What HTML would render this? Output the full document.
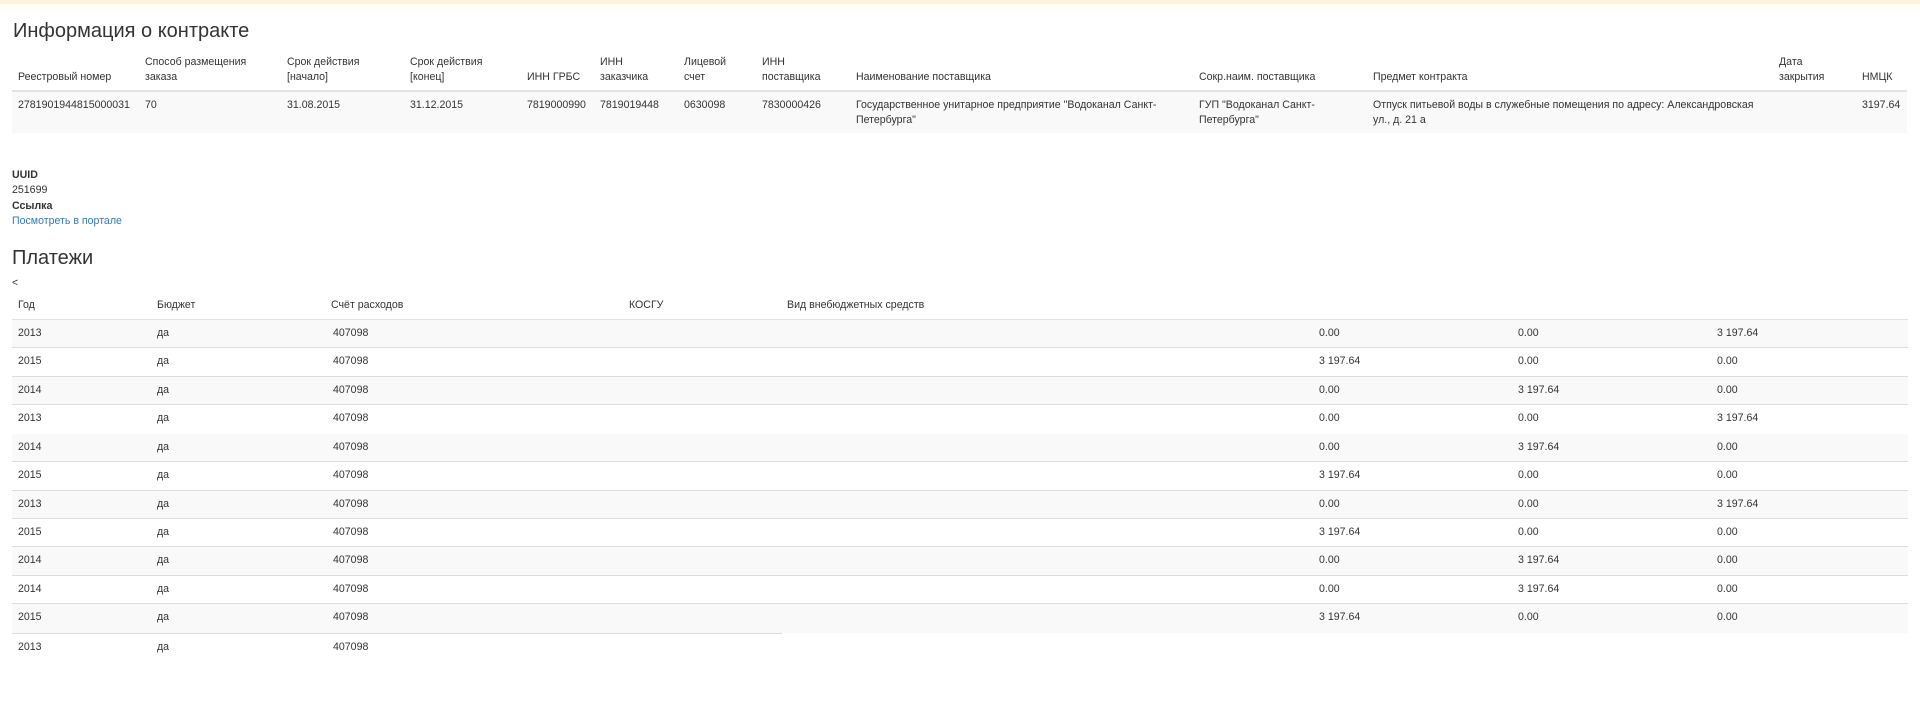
<!DOCTYPE html>
<html><head><meta charset="utf-8"><style>
body{margin:0;width:1920px;height:709px;overflow:hidden;background:#fff;font-family:"Liberation Sans",Arial,sans-serif;color:#333;position:relative;font-size:10.6px}
div.a{position:absolute;white-space:nowrap;line-height:15px}
.h{font-size:20px;line-height:22px}
.band{position:absolute;left:0;top:0;width:1920px;height:4px;background:#fbf3dc}
.band2{position:absolute;left:0;top:4px;width:1920px;height:8px;background:#fffdf6}
.bg{position:absolute;background:#f9f9f9}
.ln{position:absolute;height:1px;background:#ddd}
</style></head><body>
<div class="band"></div><div class="band2"></div>
<div class="a h" style="left:13px;top:24px">Информация о контракте</div>

<div class="a" style="left:18px;top:70px">Реестровый номер</div>
<div class="a" style="left:145px;top:55px">Способ размещения<br>заказа</div>
<div class="a" style="left:287px;top:55px">Срок действия<br>[начало]</div>
<div class="a" style="left:410px;top:55px">Срок действия<br>[конец]</div>
<div class="a" style="left:527px;top:70px">ИНН ГРБС</div>
<div class="a" style="left:600px;top:55px">ИНН<br>заказчика</div>
<div class="a" style="left:684px;top:55px">Лицевой<br>счет</div>
<div class="a" style="left:762px;top:55px">ИНН<br>поставщика</div>
<div class="a" style="left:856px;top:70px">Наименование поставщика</div>
<div class="a" style="left:1199px;top:70px">Сокр.наим. поставщика</div>
<div class="a" style="left:1373px;top:70px">Предмет контракта</div>
<div class="a" style="left:1779px;top:55px">Дата<br>закрытия</div>
<div class="a" style="left:1862px;top:70px">НМЦК</div>
<div class="ln" style="left:12px;top:90px;width:1895px;height:2px;background:#e2e2e2"></div>
<div class="bg" style="left:12px;top:92px;width:1895px;height:41px"></div>
<div class="a" style="left:18px;top:98px">2781901944815000031</div>
<div class="a" style="left:145px;top:98px">70</div>
<div class="a" style="left:287px;top:98px">31.08.2015</div>
<div class="a" style="left:410px;top:98px">31.12.2015</div>
<div class="a" style="left:527px;top:98px">7819000990</div>
<div class="a" style="left:600px;top:98px">7819019448</div>
<div class="a" style="left:684px;top:98px">0630098</div>
<div class="a" style="left:762px;top:98px">7830000426</div>
<div class="a" style="left:856px;top:98px">Государственное унитарное предприятие "Водоканал Санкт-<br>Петербурга"</div>
<div class="a" style="left:1199px;top:98px">ГУП "Водоканал Санкт-<br>Петербурга"</div>
<div class="a" style="left:1373px;top:98px">Отпуск питьевой воды в служебные помещения по адресу: Александровская<br>ул., д. 21 а</div>
<div class="a" style="left:1862px;top:98px">3197.64</div>

<div class="a" style="left:12px;top:168px;font-weight:bold">UUID</div>
<div class="a" style="left:12px;top:183px">251699</div>
<div class="a" style="left:12px;top:199px;font-weight:bold">Ссылка</div>
<div class="a" style="left:12px;top:214px;color:#337ab7">Посмотреть в портале</div>

<div class="a h" style="left:12px;top:251px">Платежи</div>
<div class="a" style="left:12px;top:276px">&lt;</div>
<div class="a" style="left:18px;top:298px">Год</div>
<div class="a" style="left:157px;top:298px">Бюджет</div>
<div class="a" style="left:331px;top:298px">Счёт расходов</div>
<div class="a" style="left:629px;top:298px">КОСГУ</div>
<div class="a" style="left:787px;top:298px">Вид внебюджетных средств</div>
<div id="rows"></div>
<script>
var d=[["2013","0.00","0.00","3 197.64"],["2015","3 197.64","0.00","0.00"],["2014","0.00","3 197.64","0.00"],["2013","0.00","0.00","3 197.64"],["2014","0.00","3 197.64","0.00"],["2015","3 197.64","0.00","0.00"],["2013","0.00","0.00","3 197.64"],["2015","3 197.64","0.00","0.00"],["2014","0.00","3 197.64","0.00"],["2014","0.00","3 197.64","0.00"],["2015","3 197.64","0.00","0.00"],["2013","","",""]];
var tops=[319,347,376,404,433,461,490,518,546,575,603,633],h="";
for(var i=0;i<12;i++){var t=tops[i],nx=i<11?tops[i+1]:661;
var w=i==11?770:1896;
if(i!=4)h+='<div class="ln" style="left:12px;top:'+t+'px;width:'+w+'px;'+(i==0?'height:2px;background:#e2e2e2':'')+'"></div>';
if(i%2==0&&i<11)h+='<div class="bg" style="left:12px;top:'+(t+1)+'px;width:1896px;height:'+(nx-t-1)+'px"></div>';
var y=t+7;
h+='<div class="a" style="left:18px;top:'+y+'px">'+d[i][0]+'</div><div class="a" style="left:157px;top:'+y+'px">да</div><div class="a" style="left:333px;top:'+y+'px">407098</div>';
if(d[i][1])h+='<div class="a" style="left:1319px;top:'+y+'px">'+d[i][1]+'</div><div class="a" style="left:1518px;top:'+y+'px">'+d[i][2]+'</div><div class="a" style="left:1717px;top:'+y+'px">'+d[i][3]+'</div>';}
document.getElementById('rows').innerHTML=h;
</script>
</body></html>
